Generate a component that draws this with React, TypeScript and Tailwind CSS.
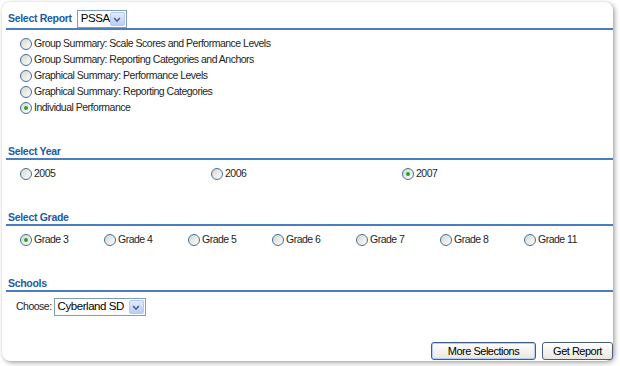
import React from 'react';

const Chevron: React.FC = () => (
  <svg width="8" height="5" viewBox="0 0 8 5" fill="none">
    <path d="M1 1 L4 4 L7 1" stroke="#4d6185" strokeWidth="1.6" />
  </svg>
);

const Select = ({ value, width }: { value: string; width: string }) => (
  <div className={`flex h-[18px] ${width} items-center justify-between border border-[#7f9db9] bg-white`}>
    <span className="whitespace-nowrap pl-[3px] text-[11.5px] leading-none tracking-[-0.45px] text-black">
      {value}
    </span>
    <span className="mr-[1px] flex h-[14px] w-[15px] shrink-0 items-center justify-center rounded-[2px] border border-[#b5c8f3] bg-gradient-to-b from-[#e3ebfd] to-[#b9cdf8]">
      <Chevron />
    </span>
  </div>
);

const Radio = ({ label, checked }: { label: string; checked?: boolean }) => (
  <label className="flex h-[16px] items-center gap-[2px] whitespace-nowrap">
    <span className="flex h-[12px] w-[12px] items-center justify-center rounded-full border border-[#456f9a] bg-gradient-to-br from-[#d6d6ce] to-white">
      {checked && <span className="h-[4px] w-[4px] rounded-full bg-[#25a525]" />}
    </span>
    <span>{label}</span>
  </label>
);

const Heading = ({ children }: { children: React.ReactNode }) => (
  <div className="border-b-2 border-[#4c7dc0] pl-[2px] text-[10.5px] font-bold leading-[13px] tracking-[-0.3px] text-[#215aa7]">
    {children}
  </div>
);

const reports = [
  'Group Summary: Scale Scores and Performance Levels',
  'Group Summary: Reporting Categories and Anchors',
  'Graphical Summary: Performance Levels',
  'Graphical Summary: Reporting Categories',
  'Individual Performance',
];

const grades = ['Grade 3', 'Grade 4', 'Grade 5', 'Grade 6', 'Grade 7', 'Grade 8', 'Grade 11'];

const App: React.FC = () => {
  return (
    <div className="h-[366px] w-[620px] bg-white p-[2px] font-['Liberation_Sans',Arial,sans-serif] text-[10.5px] tracking-[-0.5px] text-[#1e1e1e]">
      <div className="flex h-[359px] w-[611px] flex-col rounded-[8px] bg-white pl-[4px] pt-[8px] shadow-[2px_2px_5px_rgba(0,0,0,0.32),0_0_2px_rgba(0,0,0,0.15)]">
        {/* report */}
        <div className="flex items-center gap-[5px] border-b-2 border-[#4c7dc0] pl-[2px]">
          <span className="text-[10.5px] font-bold tracking-[-0.3px] text-[#215aa7]">Select Report</span>
          <Select value="PSSA" width="w-[50px]" />
        </div>
        <div className="mt-[6px] flex flex-col pl-[14px]">
          {reports.map((r, i) => (
            <Radio key={r} label={r} checked={i === reports.length - 1} />
          ))}
        </div>

        {/* year */}
        <div className="mt-[29px]">
          <Heading>Select Year</Heading>
        </div>
        <div className="mt-[6px] grid grid-cols-[191px_191px_191px] pl-[14px]">
          <Radio label="2005" />
          <Radio label="2006" />
          <Radio label="2007" checked />
        </div>

        {/* grade */}
        <div className="mt-[29px]">
          <Heading>Select Grade</Heading>
        </div>
        <div className="mt-[6px] grid grid-cols-[repeat(7,84px)] pl-[14px]">
          {grades.map((g, i) => (
            <Radio key={g} label={g} checked={i === 0} />
          ))}
        </div>

        {/* schools */}
        <div className="mt-[29px]">
          <Heading>Schools</Heading>
        </div>
        <div className="mt-[6px] flex items-center gap-[2px] pl-[10px]">
          <span>Choose:</span>
          <Select value="Cyberland SD" width="w-[92px]" />
        </div>

        <div className="mt-[26px] flex justify-end gap-[6px]">
          <button className="h-[18px] w-[105px] rounded-[3px] border border-[#3f5d86] bg-gradient-to-b from-white to-[#e9e7de] text-[11px] text-black shadow-[inset_0_0_0_1px_#b3cdf3]">
            More Selections
          </button>
          <button className="h-[18px] w-[71px] rounded-[3px] border border-[#4a5d78] bg-gradient-to-b from-white to-[#e9e7de] text-[11px] text-black">
            Get Report
          </button>
        </div>
      </div>
    </div>
  );
};

export default App;
